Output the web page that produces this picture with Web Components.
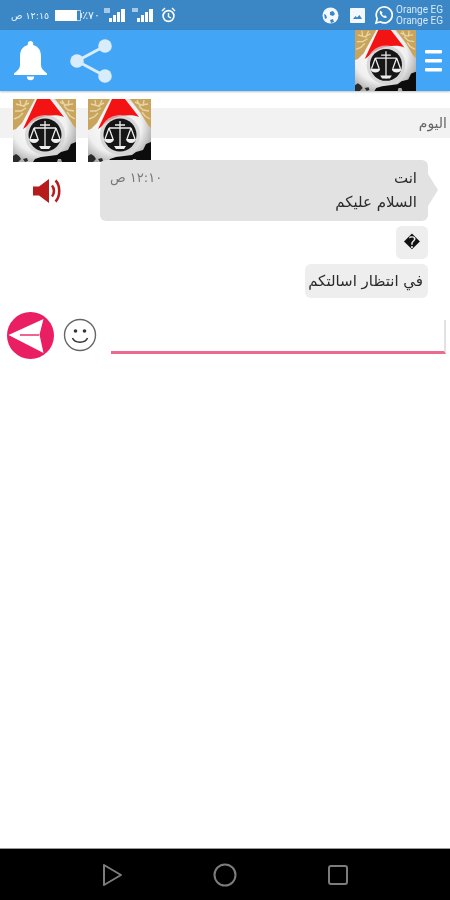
<!DOCTYPE html>
<html lang="ar">
<head>
<meta charset="utf-8">
<title>Chat</title>
<style>
html,body{margin:0;padding:0;background:#fff}
body{font-family:"DejaVu Sans","Liberation Sans",sans-serif}
</style>
</head>
<body>
<template id="t-logo">
<style>:host{display:block;width:var(--s,63px);height:var(--s,63px)}svg{display:block;width:100%;height:100%;filter:blur(.4px)}</style>
<svg viewBox="0 0 63 63">
<defs><radialGradient id="g" cx=".42" cy=".42" r=".72"><stop offset="0" stop-color="#fff"/><stop offset=".6" stop-color="#efefef"/><stop offset="1" stop-color="#8f8f8f"/></radialGradient></defs>
<rect width="63" height="63" fill="url(#g)"/>
<path d="M0 0H22L9 24 3 30 0 31Z" fill="#c9a45c"/>
<path d="M3 5l7 2 6-3M2 12l6 0 5-3M1 20l5-2 4-4M14 1l-3 7M7 1l1 6" stroke="#e8d5a6" stroke-width="1.4" fill="none"/>
<path d="M63 0H42L52 13 60 26 63 29Z" fill="#c9a45c"/>
<path d="M60 5l-7 1-6-3M61 12l-6-1-4-4M62 20l-5-3-3-4M49 1l3 6M56 1l-1 6" stroke="#e8d5a6" stroke-width="1.4" fill="none"/>
<path d="M24 0H37L51 18C42 14 23 17 13 28L10 30Z" fill="#f41313"/>
<circle cx="32" cy="36" r="20" fill="#cfcfcf" opacity=".75"/>
<circle cx="32" cy="36" r="16.500" fill="#161616"/>
<path d="M32 22V50M27 26H37M21 29H43M21 29L17 40M21 29L25 40M43 29L39 40M43 29L47 40" stroke="#eee" stroke-width="1.300" fill="none"/>
<path d="M16 40a5 4 0 0 0 10 0ZM38 40a5 4 0 0 0 10 0Z" fill="#eee"/>
<path d="M28 50H36L38 47H26Z" fill="#eee"/>
<path d="M63 43L58 45 55 51 48 53 44 56 36 57 28 58 22 60 20 63H44L45 60H48L49 63H63Z" fill="#0c0c0c"/>
<path d="M0 57l3-2 3 2 2 3-3 3H0ZM10 60l4-1 1 3-3 1Z" fill="#2a2a2a"/>
</svg>
</template>

<template id="t-status">
<style>
:host{display:flex;flex:none;height:30px;background:#3b87c6;color:#e9f3fb;align-items:center;justify-content:space-between;padding:0 7px 0 11px;box-sizing:border-box;font-family:"Liberation Sans",sans-serif;direction:ltr}
.g{display:flex;align-items:center}
svg{display:block;filter:blur(.3px)}
.t{font-family:"DejaVu Sans",sans-serif;font-size:9.500px;white-space:nowrap;filter:blur(.25px)}
.b{font-size:11px}
.c{font-family:Roboto,sans-serif;font-size:10px;line-height:11.500px;color:#d5e8f7;margin-left:3px;white-space:nowrap;filter:blur(.25px)}
</style>
<div class="g">
<span class="t" dir="rtl" style="margin-right:6px">١٢:١٥ ص</span>
<svg width="27" height="11" viewBox="0 0 27 11"><rect x=".5" y=".5" width="25" height="10" fill="none" stroke="#fff" opacity=".6"/><rect x="0" y="0" width="22" height="11" fill="#fff"/><rect x="25.500" y="3" width="1.500" height="5" fill="#fff" opacity=".7"/></svg>
<span class="t b" dir="ltr" style="margin-right:4px">٪٧٠</span>
<svg width="22" height="18" viewBox="0 0 22 18" style="margin-right:6px"><rect x="5" y="12" width="3" height="4" fill="#fff"/><rect x="9" y="9" width="3" height="7" fill="#fff"/><rect x="13" y="6" width="3" height="10" fill="#fff"/><rect x="17" y="3" width="4" height="13" fill="#fff"/><rect x="0" y="2" width="6" height="5" fill="#fff" opacity=".55"/></svg>
<svg width="22" height="18" viewBox="0 0 22 18" style="margin-right:7px"><rect x="5" y="12" width="3" height="4" fill="#fff"/><rect x="9" y="9" width="3" height="7" fill="#fff"/><rect x="13" y="6" width="3" height="10" fill="#fff"/><rect x="17" y="3" width="4" height="13" fill="#fff"/><rect x="0" y="2" width="6" height="4" fill="#fff" opacity=".55"/></svg>
<svg width="15" height="16" viewBox="0 0 15 16"><circle cx="7.500" cy="9" r="5.400" fill="none" stroke="#fff" stroke-width="1.600"/><path d="M7.500 6V9.500L10 11M1 4l3-3M14 4l-3-3" stroke="#fff" stroke-width="1.400" fill="none"/></svg>
</div>
<div class="g">
<svg width="17" height="17" viewBox="0 0 17 17" style="margin-right:11px"><circle cx="8.500" cy="8.500" r="8" fill="#f2f8fd"/><path d="M8 5l3-1 2 3-2 2-3-1ZM2 7l2 1 1 3-2 1ZM8 13l3-1 1 3-3 1Z" fill="#3b87c6"/></svg>
<svg width="15" height="15" viewBox="0 0 15 15" style="margin-right:9px"><rect width="15" height="15" rx="1" fill="#f2f8fd"/><path d="M3 11L5.500 8 7 9.500 9.500 7 12 11Z" fill="#3b87c6"/></svg>
<svg width="19" height="20" viewBox="0 0 19 20"><path d="M2 18l1.200-4.300A8 8 0 1 1 6.200 16.800Z" fill="none" stroke="#fff" stroke-width="1.700"/><path d="M6.500 5.500c-1.500 1.500-.6 3.700 1.200 5.500s3.800 2.700 5.300 1.300l-1.800-2-1.200.8c-1-.5-1.700-1.300-2.200-2.300l.8-1.100Z" fill="#fff"/></svg>
<div class="c"><div>Orange EG</div><div>Orange EG</div></div>
</div>
</template>

<template id="t-appbar">
<style>
:host{display:flex;flex:none;height:61px;background:#42a5f5;align-items:center;box-sizing:border-box;padding:0 8px 0 14px;box-shadow:0 1px 2px rgba(0,0,0,.25);position:relative;z-index:1}
.sp{flex:1}
svg{display:block}
app-logo{--s:61px;margin-right:9px}
</style>
<svg width="33" height="40" viewBox="0 0 33 40" style="margin-right:23px"><path d="M16.500 0c1.600 0 2.700 1.100 2.700 2.600v1.300C24.500 5.300 27 9.600 27 15v9c0 3 2 5.500 6 8.500V34H0v-1.500C4 29.500 6 27 6 24v-9C6 9.600 8.500 5.300 13.800 3.900V2.600C13.800 1.100 14.900 0 16.500 0Z" fill="#fff"/><path d="M12.800 35.500h7.400a3.700 3.700 0 0 1-7.400 0Z" fill="#fff"/></svg>
<svg width="43" height="46" viewBox="0 0 43 46" fill="#d9ecfc"><path d="M35 8L7 23 35 38" fill="none" stroke="#d9ecfc" stroke-width="3"/><circle cx="35" cy="8" r="6.800"/><circle cx="7" cy="23" r="6.800"/><circle cx="35" cy="38" r="6.800"/></svg>
<div class="sp"></div>
<app-logo></app-logo>
<svg width="17" height="22" viewBox="0 0 17 22" fill="#fff"><rect y="0" width="17" height="3.400" rx="1"/><rect y="9" width="17" height="3.400" rx="1"/><rect y="18" width="17" height="3.400" rx="1"/></svg>
</template>

<template id="t-day">
<style>
:host{display:block;height:30px;margin-top:17px;background:#f2f2f2;position:relative;color:#666;font-size:14px;line-height:30px;text-align:right}
span{padding-right:3px;filter:blur(.3px);display:inline-block}
.a{position:absolute;top:-9px;display:block}
</style>
<span><slot></slot></span>
<app-logo class="a" style="left:13px"></app-logo>
<app-logo class="a" style="left:88px"></app-logo>
</template>

<template id="t-bubble">
<style>
:host{display:block;box-sizing:border-box;background:#eeeeee;border-radius:6px;padding:8px 5px 6px 10px;color:#2b2b2b;font-size:15px;line-height:20px;text-align:right;position:relative;width:max-content;max-width:100%;direction:rtl}
:host([tail]){background:#e2e2e2;width:328px;height:61px;padding:8px 11px 0 10px}
:host([tail])::after{content:"";position:absolute;right:-10px;top:14px;border:solid transparent;border-width:16px 0 16px 10px;border-left-color:#e2e2e2}
.in{display:block;filter:blur(.3px)}
</style>
<div class="in"><slot></slot></div>
</template>

<template id="t-chat">
<style>
:host{display:flex;flex-direction:column;align-items:flex-end;padding:0 22px 0 0;flex:none}
.row{display:flex;width:100%;align-items:flex-start;margin-top:22px}
.side{width:100px;flex:none;display:flex;justify-content:center;padding:16px 6px 0 0;box-sizing:border-box}
.meta{display:flex;justify-content:space-between;height:24px}
.time{font-size:13px;color:#777;white-space:nowrap}
.sec{margin-top:5px}
svg{display:block}
</style>
<div class="row">
<div class="side"><svg width="31" height="30" viewBox="0 0 31 30" fill="#b71c1c"><path d="M1 10.500H7L17 3V27L7 19.500H1Z"/><path d="M20 9.500c2.600 3 2.600 8 0 11" fill="none" stroke="#b71c1c" stroke-width="2.600"/><path d="M23.500 4.500c5 5 5 16 0 21" fill="none" stroke="#b71c1c" stroke-width="2.600"/></svg></div>
<chat-bubble tail><div class="meta"><span>انت</span><span class="time">١٢:١٠ ص</span></div><div>السلام عليكم</div></chat-bubble>
</div>
<chat-bubble class="sec" style="width:32px;height:33px;padding:7px 0 0;text-align:center;font-size:16px;color:#111">�</chat-bubble>
<chat-bubble class="sec" style="width:123px;height:34px;padding:7px 5px 0 0;white-space:nowrap">في انتظار اسالتكم</chat-bubble>
</template>

<template id="t-compose">
<style>
:host{display:flex;flex:none;align-items:center;height:50px;margin-top:12px;padding-left:7px;position:relative}
svg{display:block}
.f{flex:none;width:335px;height:34px;margin-left:14px;margin-top:4px;box-sizing:border-box;border-bottom:3px solid #ec6a8c;border-right:2px solid #e2e2e2}
</style>
<svg width="47" height="47" viewBox="0 0 47 47"><circle cx="23.500" cy="23.500" r="23.500" fill="#e91e63"/><path d="M1.500 23L36.500 7 32.500 22.500 36.500 41Z" fill="#fff"/><path d="M13 23H32" stroke="#f06292" stroke-width="2"/></svg>
<svg width="34" height="34" viewBox="0 0 34 34" style="margin-left:9px"><circle cx="17" cy="17" r="15.500" fill="#fff" stroke="#666" stroke-width="1.400"/><circle cx="12.500" cy="13" r="1.800" fill="#333"/><circle cx="21.500" cy="13" r="1.800" fill="#333"/><path d="M9.500 20c2 5.500 13 5.500 15 0" fill="none" stroke="#333" stroke-width="1.500"/></svg>
<div class="f"></div>
</template>

<template id="t-nav">
<style>
:host{display:flex;flex:none;height:52px;background:#000;border-top:1px solid #9a9a9a;box-sizing:border-box;align-items:center;justify-content:center;gap:89px;margin-top:auto}
svg{display:block}
</style>
<svg width="24" height="26" viewBox="0 0 24 26" fill="none" stroke="#7c7c7c" stroke-width="2" stroke-linejoin="round"><path d="M4 3L21 13 4 23Z"/></svg>
<svg width="24" height="24" viewBox="0 0 24 24" fill="none" stroke="#7c7c7c" stroke-width="2"><circle cx="12" cy="12" r="10.500"/></svg>
<svg width="24" height="24" viewBox="0 0 24 24" fill="none" stroke="#7c7c7c" stroke-width="2"><rect x="3" y="3" width="18" height="18" rx="2"/></svg>
</template>

<template id="t-app">
<style>:host{display:flex;flex-direction:column;width:450px;height:900px;overflow:hidden;background:#fff}</style>
<status-bar></status-bar>
<app-bar></app-bar>
<day-divider dir="rtl">اليوم</day-divider>
<chat-log></chat-log>
<chat-compose></chat-compose>
<nav-bar></nav-bar>
</template>

<chat-app></chat-app>

<script>
const reg=(name,id)=>customElements.define(name,class extends HTMLElement{
  constructor(){super();this.attachShadow({mode:"open"}).appendChild(document.getElementById(id).content.cloneNode(true));}
});
reg("app-logo","t-logo");reg("status-bar","t-status");reg("app-bar","t-appbar");reg("day-divider","t-day");
reg("chat-bubble","t-bubble");reg("chat-log","t-chat");reg("chat-compose","t-compose");reg("nav-bar","t-nav");reg("chat-app","t-app");
</script>
</body>
</html>
